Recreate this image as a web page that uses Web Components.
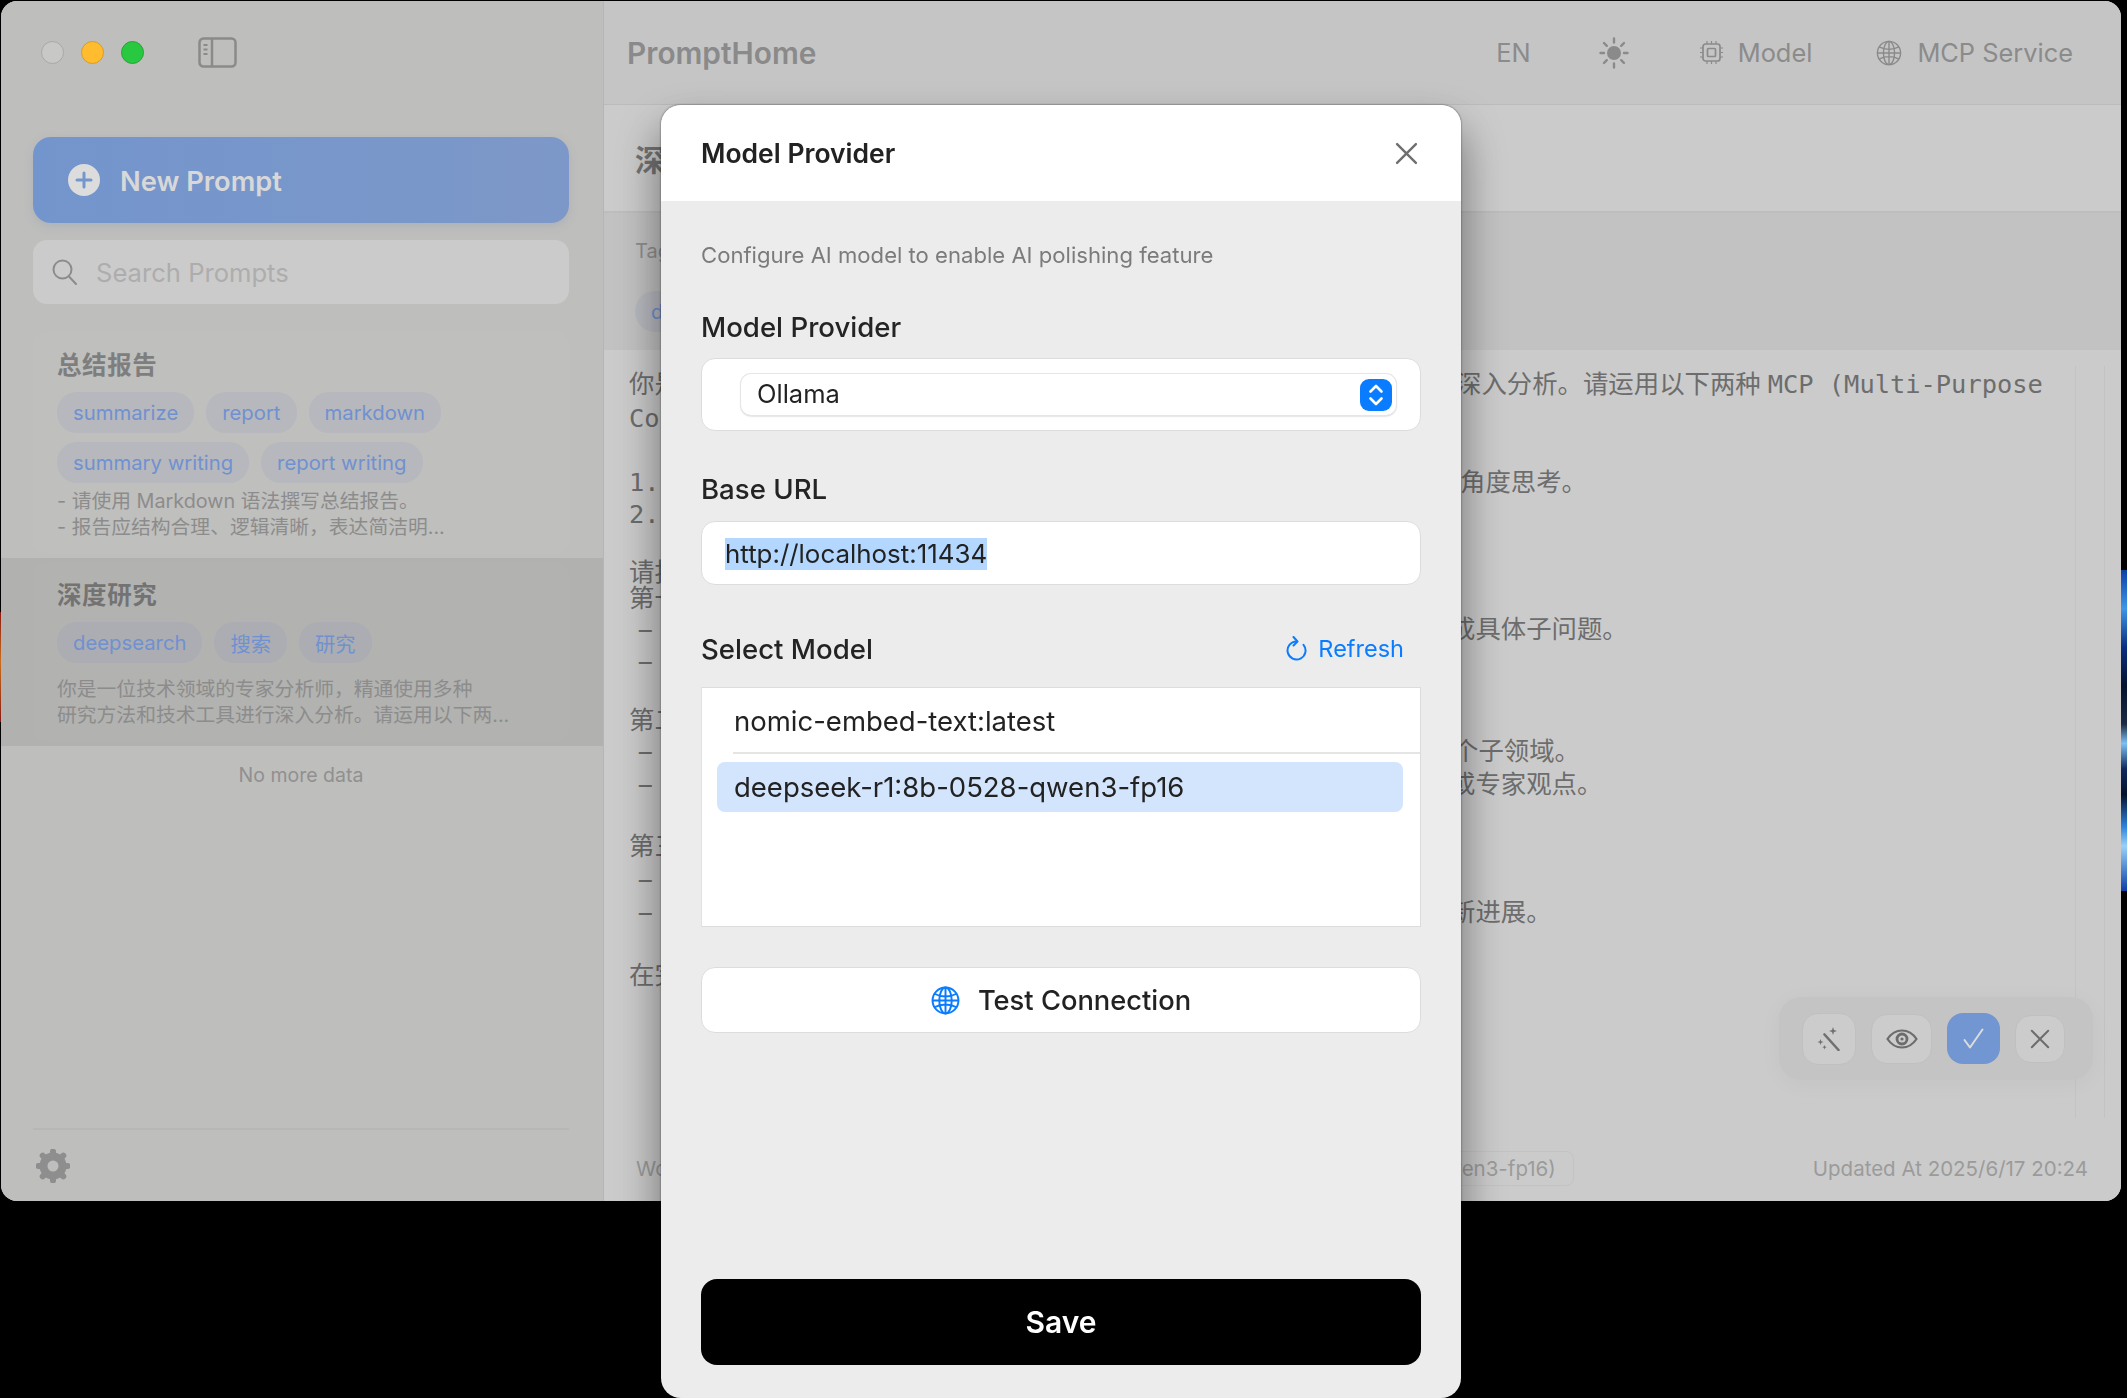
<!DOCTYPE html>
<html>
<head>
<meta charset="utf-8">
<title>PromptHome</title>
<style>
  html, body { margin: 0; height: 1398px; overflow: hidden; background: #000; }
  body { position: relative; font-family: Inter, "Noto Sans CJK SC", sans-serif; }
</style>
</head>
<body>
<desk-backdrop></desk-backdrop>

<app-window>
  <app-sidebar slot="sidebar">
    <prompt-card>
      <span slot="title">总结报告</span>
      <tag-chip>summarize</tag-chip><tag-chip>report</tag-chip><tag-chip>markdown</tag-chip>
      <tag-chip>summary writing</tag-chip><tag-chip>report writing</tag-chip>
      <span slot="desc" style="display:block;margin-top:5px">- 请使用 Markdown 语法撰写总结报告。<br>- 报告应结构合理、逻辑清晰，表达简洁明...</span>
    </prompt-card>
    <prompt-card selected>
      <span slot="title">深度研究</span>
      <tag-chip>deepsearch</tag-chip><tag-chip>搜索</tag-chip><tag-chip>研究</tag-chip>
      <span slot="desc" style="display:block;margin-top:13px">你是一位技术领域的专家分析师，精通使用多种<br>研究方法和技术工具进行深入分析。请运用以下两...</span>
    </prompt-card>
  </app-sidebar>
  <app-main slot="main"></app-main>
</app-window>

<model-dialog></model-dialog>

<script>
const uiFont = 'Inter, "Noto Sans CJK SC", sans-serif';
const monoFont = '"DejaVu Sans Mono", "Noto Sans CJK SC", monospace';

function register(name, markup) {
  customElements.define(name, class extends HTMLElement {
    constructor() {
      super();
      const template = document.createElement('template');
      template.innerHTML = markup;
      this.attachShadow({mode: 'open'}).appendChild(template.content.cloneNode(true));
    }
  });
}

const globeIcon = (size, color, width) => `
<svg width="${size}" height="${size}" viewBox="0 0 28 28" fill="none" stroke="${color}" stroke-width="${width}">
  <circle cx="14" cy="14" r="12.5"/>
  <ellipse cx="14" cy="14" rx="6" ry="12.5"/>
  <path d="M14 1.5v25M3.4 7.5c6 3.4 15.200 3.400 21.200 0M3.400 20.500c6-3.400 15.200-3.400 21.200 0M1.500 14h25"/>
</svg>`;

const crossIcon = (size, color, width) => `
<svg width="${size}" height="${size}" viewBox="0 0 22 22" fill="none" stroke="${color}" stroke-width="${width}" stroke-linecap="round">
  <path d="M2 2l18 18M20 2L2 20"/>
</svg>`;

// the bits of wallpaper that show past the window edge
register('desk-backdrop', `
<style>
  :host { display: block; }
  .left, .right { position: absolute; }
  .left { left: 0; top: 612px; width: 1px; height: 110px; background: linear-gradient(#8a1a14, #c8701c 45%, #8a1a14); }
  .right { left: 2121px; top: 570px; width: 6px; height: 321px;
    background: linear-gradient(#0b3fa8, #3f95e8 12%, #0a2f80 24%, #05122e 36%, #1d2a44 48%, #7cc0f4 54%, #10295c 62%, #05122e 70%, #2f82de 80%, #9ad0f7 86%, #0b3fa8 100%); }
</style>
<div class="left"></div><div class="right"></div>`);

register('app-window', `
<style>
  :host { display: flex; width: 2120px; height: 1200px; margin: 1px 0 0 1px; border-radius: 16px; overflow: hidden; background: #cbcbcb; }
</style>
<slot name="sidebar"></slot>
<slot name="main"></slot>`);

register('traffic-lights', `
<style>
  :host { display: flex; gap: 17px; }
  i { width: 23px; height: 23px; border-radius: 50%; box-sizing: border-box; }
  .close { background: #c8c8c6; border: 1px solid #a8a8a6; }
  .min { background: #febc2e; border: 1px solid #dc9c1e; }
  .max { background: #28c840; border: 1px solid #20a834; }
</style>
<i class="close"></i><i class="min"></i><i class="max"></i>`);

register('new-prompt-button', `
<style>
  :host { display: flex; align-items: center; gap: 20px; height: 86px; padding-left: 35px; border-radius: 18px;
    background: linear-gradient(90deg, #7395cd, #7d98c8); box-shadow: 0 3px 10px rgba(110,130,170,.22);
    color: #d8d8d8; font: 600 27.300px ${uiFont}; }
  svg { display: block; }
  span { padding-top: 3px; }
</style>
<svg width="32" height="32" viewBox="0 0 32 32">
  <circle cx="16" cy="16" r="16" fill="#dcdcdc"/>
  <path d="M16 9v14M9 16h14" stroke="#7596cc" stroke-width="3" stroke-linecap="round"/>
</svg>
<span>New Prompt</span>`);

register('search-box', `
<style>
  :host { display: flex; align-items: center; gap: 19px; height: 64px; padding-left: 19px; border-radius: 14px;
    background: #cbcbcb; color: #adadad; font: 400 25.600px ${uiFont}; }
  svg { display: block; }
</style>
<svg width="25" height="26" viewBox="0 0 25 26" fill="none" stroke="#8c8c8c" stroke-width="2" stroke-linecap="round">
  <circle cx="10.500" cy="10.500" r="9"/><path d="M17 17.500l7 7.500"/>
</svg>
<span>Search Prompts</span>`);

register('tag-chip', `
<style>
  :host { display: inline-flex; align-items: center; height: 41px; padding: 0 16px; border-radius: 20px;
    background: rgba(120,140,190,.13); color: #7091d0; font: 400 20.300px ${uiFont}; white-space: nowrap; }
</style>
<slot></slot>`);

register('prompt-card', `
<style>
  :host { display: block; padding: 4px 34px 4px 32px; }
  :host([selected]) { background: #b1b1af; }
  .card { padding: 16px 24px 14px; border-radius: 14px; background: rgba(255,255,255,.022); }
  .title { font: 700 24.500px/34px ${uiFont}; color: #7e7e7e; letter-spacing: .6px; }
  :host([selected]) .title { color: #737373; }
  .tags { display: flex; flex-wrap: wrap; gap: 9px 12px; margin-top: 10px; }
  .desc { font: 400 19.800px/26px ${uiFont}; color: #8c8c8c; white-space: nowrap; }
</style>
<div class="card">
  <div class="title"><slot name="title"></slot></div>
  <div class="tags"><slot></slot></div>
  <div class="desc"><slot name="desc"></slot></div>
</div>`);

register('app-sidebar', `
<style>
  :host { display: flex; flex-direction: column; width: 602px; height: 1200px; flex: none; background: #bebebc; }
  .titlebar { display: flex; align-items: flex-start; height: 136px; padding: 40px 0 0 40px; box-sizing: border-box; }
  .toggle { margin: -4px 0 0 54px; display: block; }
  .top { padding: 0 34px 0 32px; }
  search-box { margin-top: 17px; }
  .list { margin-top: 24px; }
  .more { height: 58px; padding-right: 2px; text-align: center; color: #909090; font: 400 19.500px/58px ${uiFont}; }
  .foot { margin: auto 34px 0 32px; height: 73px; box-sizing: border-box; border-top: 2px solid #b7b7b4; padding-top: 19px; }
  .foot svg { display: block; margin-left: 3px; }
</style>
<div class="titlebar">
  <traffic-lights></traffic-lights>
  <svg class="toggle" width="39" height="31" viewBox="0 0 39 31" fill="none" stroke="#8a8a8a" stroke-width="2.500">
    <rect x="1.500" y="1.500" width="36" height="28" rx="4"/>
    <path d="M14 1.500v28"/>
    <path d="M5.500 8h4M5.500 12.500h4M5.500 17h4" stroke-width="1.800"/>
  </svg>
</div>
<div class="top">
  <new-prompt-button></new-prompt-button>
  <search-box></search-box>
</div>
<div class="list"><slot></slot></div>
<div class="more">No more data</div>
<div class="foot">
  <svg width="34" height="34" viewBox="0 0 34 34" fill="none" stroke="#8e8e8e">
    <circle cx="17" cy="17" r="9.500" stroke-width="8"/>
    <path d="M17 2.500v4M17 27.500v4M2.500 17h4M27.500 17h4M6.700 6.700l3 3M24.300 24.300l3 3M27.300 6.700l-3 3M9.700 24.300l-3 3" stroke-width="6" stroke-linecap="round"/>
  </svg>
</div>`);

register('app-header', `
<style>
  :host { display: flex; align-items: center; height: 104px; box-sizing: border-box; padding: 0 48px 0 23px;
    background: #c5c5c5; border-bottom: 1px solid #bbb; color: #8b8b8b; font: 400 25.400px ${uiFont}; }
  .brand { font: 600 29.800px ${uiFont}; color: #8a8a8a; margin-right: auto; }
  .item { display: flex; align-items: center; gap: 15px; margin-left: 64px; }
  svg { display: block; }
</style>
<div class="brand">PromptHome</div>
<div class="item">EN</div>
<div class="item" style="margin-left:68px">
  <svg width="30" height="32" viewBox="0 0 30 32" stroke="#8a8a8a" stroke-width="2.400" stroke-linecap="round">
    <circle cx="15" cy="16" r="7" fill="#8a8a8a" stroke="none"/>
    <path d="M15 1.500v4M15 26.500v4M1.500 16h3.500M25 16h3.500M5 6l2.800 2.800M22.200 23.200L25 26M25 6l-2.800 2.800M7.800 23.200L5 26" fill="none"/>
  </svg>
</div>
<div class="item" style="margin-left:71px">
  <svg width="23" height="23" viewBox="0 0 23 23" fill="none" stroke="#8a8a8a" stroke-width="1.700">
    <rect x="3" y="3" width="17" height="17" rx="2.500"/>
    <rect x="7.500" y="7.500" width="8" height="8" rx="1"/>
    <path d="M7 0v3M11.500 0v3M16 0v3M7 20v3M11.500 20v3M16 20v3M0 7h3M0 11.500h3M0 16h3M20 7h3M20 11.500h3M20 16h3" stroke-width="1.200"/>
  </svg>
  <span>Model</span>
</div>
<div class="item">
  ${globeIcon(26, '#8a8a8a', 1.500)}
  <span>MCP Service</span>
</div>`);

register('floating-toolbar', `
<style>
  :host { position: absolute; right: 28px; bottom: 55px; display: flex; align-items: center; height: 83px; box-sizing: border-box;
    padding: 0 28px 0 23px; gap: 15px; border-radius: 22px; background: #c4c4c4; box-shadow: 0 4px 24px rgba(0,0,0,.035); }
  .btn { display: flex; align-items: center; justify-content: center; box-sizing: border-box; border-radius: 16px; background: #cccccc; border: 1.500px solid #c0c0c0; }
  .ok { background: #7196d2; border: none; }
  svg { display: block; }
</style>
<div class="btn" style="width:54px;height:52px">
  <svg width="24" height="24" viewBox="0 0 24 24" fill="none" stroke="#707070">
    <path d="M7.500 7.500L21.500 23" stroke-width="2.600" stroke-linecap="round"/>
    <path d="M16 0l1 3 3 1-3 1-1 3-1-3-3-1 3-1zM3.500 12l.8 2.200 2.200.8-2.200.8-.8 2.200-.8-2.200L.5 15l2.200-.8zM7.500 18l.6 1.600 1.600.6-1.600.6-.6 1.600-.6-1.600-1.600-.6 1.600-.6z" fill="#707070" stroke="none"/>
  </svg>
</div>
<div class="btn" style="width:61px;height:50px">
  <svg width="32" height="20" viewBox="0 0 32 20" fill="none" stroke="#6c6c6c">
    <path d="M1.500 10C5.500 4 10.500 1.500 16 1.500S26.500 4 30.500 10C26.500 16 21.500 18.500 16 18.500S5.500 16 1.500 10z" stroke-width="2.200"/>
    <circle cx="16" cy="10" r="5" stroke-width="2.800"/>
    <circle cx="16" cy="10" r="1.600" fill="#6c6c6c" stroke="none"/>
  </svg>
</div>
<div class="btn ok" style="width:53px;height:51px">
  <svg width="21" height="21" viewBox="0 0 21 21" fill="none" stroke="#dcdcdc" stroke-width="2" stroke-linecap="round" stroke-linejoin="round">
    <path d="M1.500 12l5.500 7.500L19.500 1.500"/>
  </svg>
</div>
<div class="btn" style="width:50px;height:48px">${crossIcon(20, '#6c6c6c', 2.200)}</div>`);

// left: what shows beside the dialog, right: what shows past it, nudge: where the right part starts against 1461px
const promptLines = [
  ['你是', '深入分析。请运用以下两种<span style="margin-left:7px">MCP</span> (Multi-Purpose', -5, 0],
  ['Co', '', 0, 34],
  ['1.', '角度思考。', -1, 64],
  ['2.', '', 0, 32],
  ['请按', '', 0, 58],
  ['第一', '', 0, 26],
  ['<b>-</b>', '成具体子问题。', -11, 31],
  ['<b>-</b>', '', 0, 32],
  ['第二', '', 0, 59],
  ['<b>-</b>', '个子领域。', -8, 31],
  ['<b>-</b>', '或专家观点。', -11, 33],
  ['第三', '', 0, 62],
  ['<b>-</b>', '', 0, 33],
  ['<b>-</b>', '新进展。', -11, 33],
  ['在完', '', 0, 63],
];

register('prompt-editor', `
<style>
  :host { position: relative; display: flex; flex: 1; min-height: 0; background: #cbcbcb; }
  .text { flex: 1; padding: 21px 0 0 25px; color: #6d6d6d; font: 400 25.400px/26px ${monoFont}; white-space: nowrap; }
  .line { display: grid; grid-template-columns: 832px 1fr; height: 26px; }
  .line b { display: inline-block; font-weight: 400; transform: scaleX(2); transform-origin: 0 50%; margin-left: 1px; }
  .track { flex: none; width: 28px; margin: 16px 16px 17px 0; border-left: 1px solid #c3c3c3; border-right: 1px solid #c3c3c3; }
</style>
<div class="text">${promptLines.map(([left, right, nudge, gap]) => `<div class="line" style="margin-top:${gap ? gap - 26 : 0}px"><span>${left}</span><span style="margin-left:${nudge}px">${right}</span></div>`).join('')}</div>
<div class="track"></div>
<floating-toolbar></floating-toolbar>`);

register('app-main', `
<style>
  :host { display: flex; flex-direction: column; flex: 1; min-width: 0; height: 1200px; border-left: 1px solid #b5b5b3; box-sizing: border-box; }
  .title { height: 108px; box-sizing: border-box; padding-left: 31px; display: flex; align-items: center; background: #cbcbcb; border-bottom: 2px solid #bdbdbd;
    font: 700 30px ${uiFont}; color: #737373; }
  .tags { display: flex; flex-direction: column; align-items: flex-start; height: 137px; box-sizing: border-box; padding: 23px 0 0 31px; background: #c2c2c2; color: #8f8f8f; font: 400 20px/30px ${uiFont}; }
  .tags tag-chip { margin-top: 25px; }
  .foot { display: flex; align-items: center; height: 66px; flex: none; padding: 0 33px 0 32px; background: #cbcbcb; color: #9b9b9b; font: 400 20.500px ${uiFont}; }
  .foot .left { margin-right: auto; }
  .model { height: 35px; line-height: 33px; box-sizing: border-box; padding: 0 17px; border: 1.500px solid #c3c3c3; border-radius: 8px; margin-right: 239px; }
</style>
<app-header></app-header>
<div class="title">深度研究</div>
<div class="tags">
  <div>Tags</div>
  <tag-chip>deepsearch</tag-chip>
</div>
<prompt-editor></prompt-editor>
<div class="foot">
  <span class="left">Wo</span>
  <span class="model">(deepseek-r1:8b-0528-qwen3-fp16)</span>
  <span>Updated At 2025/6/17 20:24</span>
</div>`);

register('select-field', `
<style>
  :host { display: block; padding: 15px 24px 15px 39px; background: #fff; border: 1.500px solid #dcdcdc; border-radius: 14px; box-sizing: border-box; height: 73px; }
  .box { display: flex; align-items: center; height: 41px; box-sizing: border-box; padding: 0 4px 0 16px; border-radius: 10px; background: #fff;
    box-shadow: 0 0 0 1px #e6e6e6, 0 1px 2px rgba(0,0,0,.32); }
  .value { flex: 1; margin-top: -2px; font: 400 25.500px ${uiFont}; color: #222; }
  svg { display: block; }
</style>
<div class="box">
  <span class="value"><slot></slot></span>
  <svg width="32" height="32" viewBox="0 0 32 32" fill="none">
    <rect width="32" height="32" rx="9" fill="#0a7cff"/>
    <path d="M10.500 12.500L16 7l5.500 5.500M10.500 19.500L16 25l5.500-5.500" stroke="#fff" stroke-width="2.600" stroke-linecap="round" stroke-linejoin="round"/>
  </svg>
</div>`);

register('model-list', `
<style>
  :host { display: block; height: 240px; box-sizing: border-box; background: #fff; border-top: 1.500px solid #dcdcdc; border-bottom: 1.500px solid #dcdcdc;
    border-left: 1px solid #e2e2e2; border-right: 1px solid #dcdcdc; color: #222; font: 400 27.500px ${uiFont}; }
  .row { height: 64px; line-height: 67px; margin-left: 31px; padding-left: 1px; border-bottom: 2px solid #e5e5e5; }
  .current { margin: 8px 17px 0 15px; height: 50px; line-height: 50px; padding-left: 17px; border-radius: 8px; background: #d3e4fd; }
</style>
<div class="row">nomic-embed-text:latest</div>
<div class="current">deepseek-r1:8b-0528-qwen3-fp16</div>`);

register('model-dialog', `
<style>
  :host { position: absolute; left: 661px; top: 105px; width: 800px; height: 1293px; display: flex; flex-direction: column; box-sizing: border-box;
    border-radius: 20px; background: #ececec; overflow: hidden;
    filter: drop-shadow(0 24px 22px rgba(0,0,0,.32)) drop-shadow(0 0 1px rgba(0,0,0,.5)); }
  header { display: flex; align-items: center; justify-content: space-between; height: 96px; flex: none; padding: 0 43px 0 40px; background: #fff;
    font: 600 26.500px ${uiFont}; color: #222; }
  header svg { display: block; }
  .body { display: flex; flex-direction: column; flex: 1; padding: 39px 40px 33px; }
  .hint { font: 400 22.100px/30px ${uiFont}; color: #7b7b7b; }
  .label { font: 500 27.600px/36px ${uiFont}; color: #242424; }
  .input { height: 64px; box-sizing: border-box; padding: 2px 0 0 23px; display: flex; align-items: center; background: #fff; border: 1.500px solid #dcdcdc; border-radius: 14px;
    font: 400 25.900px ${uiFont}; color: #222; }
  .input span { background: #b3d7ff; line-height: 32px; }
  .row { display: flex; align-items: center; justify-content: space-between; padding-right: 17px; margin-top: 46px; }
  .refresh { display: flex; align-items: center; gap: 11px; margin-top: -2px; color: #0a7cff; font: 400 23.500px ${uiFont}; }
  .refresh svg, .test svg { display: block; }
  .test { display: flex; align-items: center; justify-content: center; gap: 18px; height: 66px; box-sizing: border-box; margin-top: 40px; padding-top: 1px; background: #fff;
    border: 1.500px solid #dcdcdc; border-radius: 14px; font: 500 27.300px ${uiFont}; color: #222; }
  .save { display: flex; align-items: center; justify-content: center; height: 86px; margin-top: auto; background: #000; border-radius: 16px; color: #fff; font: 600 30px ${uiFont}; }
</style>
<header>
  <span>Model Provider</span>
  ${crossIcon(23, '#6f6f6f', 2.300)}
</header>
<div class="body">
  <div class="hint">Configure AI model to enable AI polishing feature</div>
  <div class="label" style="margin-top:39px">Model Provider</div>
  <select-field style="margin-top:13px">Ollama</select-field>
  <div class="label" style="margin-top:40px">Base URL</div>
  <div class="input" style="margin-top:14px"><span>http://localhost:11434</span></div>
  <div class="row">
    <span class="label">Select Model</span>
    <span class="refresh">
      <svg width="21" height="25" viewBox="0 0 21 25" fill="none" stroke="#0a7cff" stroke-width="2" stroke-linecap="round" stroke-linejoin="round">
        <path d="M10.500 5.500a9 9 0 1 0 7 3.300"/>
        <path d="M7.500 1l4 4.500-4 4"/>
      </svg>
      Refresh
    </span>
  </div>
  <model-list style="margin-top:20px"></model-list>
  <div class="test">${globeIcon(29, '#0a7cff', 1.900)}<span>Test Connection</span></div>
  <div class="save">Save</div>
</div>`);
</script>
</body>
</html>
